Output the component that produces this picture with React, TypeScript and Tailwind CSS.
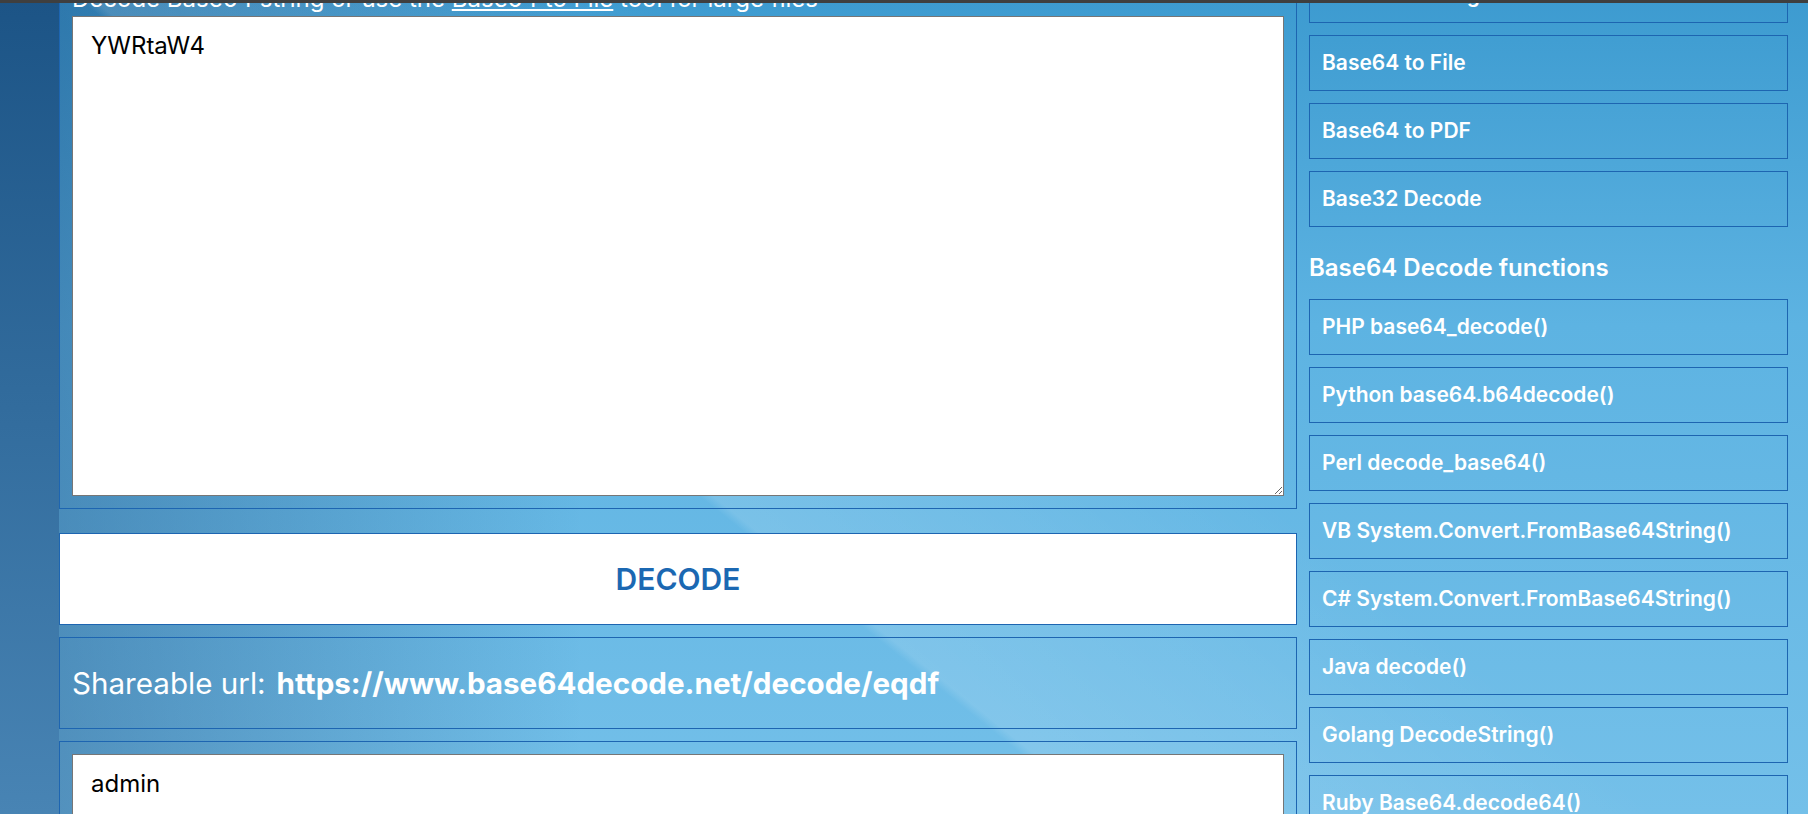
export default function App() {
  const topLinks = ["Base64 to Image", "Base64 to File", "Base64 to PDF", "Base32 Decode"];
  const fns = [
    "PHP base64_decode()",
    "Python base64.b64decode()",
    "Perl decode_base64()",
    "VB System.Convert.FromBase64String()",
    "C# System.Convert.FromBase64String()",
    "Java decode()",
    "Golang DecodeString()",
    "Ruby Base64.decode64()",
  ];
  return (
    <div className="relative flex h-[814px] w-[1808px] overflow-hidden [font-family:Inter,sans-serif] bg-[linear-gradient(to_bottom,#1c5486,#4884b4)]">
      <div className="w-[59px] shrink-0" />
      <div className="flex flex-1 items-start gap-[12px] bg-[linear-gradient(38.7deg,rgba(255,255,255,0)_37.5%,rgba(255,255,255,0.13)_38%,rgba(255,255,255,0.07)_48%,rgba(255,255,255,0)_58%),linear-gradient(to_right,rgba(15,50,100,0.33)_0%,rgba(15,50,100,0)_30%),linear-gradient(to_bottom,#3d9bd0_0%,#5db3e2_40%,#74c0e9_100%)]">
        <div className="mt-[-28px] flex w-[1238px] shrink-0 flex-col">
          <div className="border border-[#1d65b1] p-[12px]">
            <p className="mb-[3px] text-[24px] leading-[28px] text-white">
              Decode Base64 string or use the <a className="underline">Base64 to File</a> tool for large files
            </p>
            <textarea
              className="block h-[480px] w-full border border-[#767676] bg-white px-[18px] py-[12px] text-[24px] leading-[1.4] text-black outline-none"
              defaultValue="YWRtaW4"
            />
          </div>
          <button className="mt-[24px] h-[92px] border border-[#1d65b1] bg-white text-[30px] font-semibold text-[#1b68b2]">
            DECODE
          </button>
          <div className="mt-[12px] flex h-[92px] items-center border border-[#1d65b1] px-[12px] text-[29.6px] text-white">
            <span>Shareable url:</span>
            <span className="ml-[11px] font-bold">https://www.base64decode.net/decode/eqdf</span>
          </div>
          <div className="mt-[12px] border border-[#1d65b1] p-[12px]">
            <textarea
              className="block h-[480px] w-full border border-[#767676] bg-white px-[18px] py-[12px] text-[24px] leading-[1.4] text-black outline-none"
              defaultValue="admin"
            />
          </div>
        </div>
        <div className="mt-[-33px] flex w-[479px] shrink-0 flex-col">
          <div className="flex flex-col gap-[12px]">
            {topLinks.map((t) => (
              <div key={t} className="flex h-[56px] items-center border border-[#1d65b1] px-[12px] text-[21px] font-semibold leading-[28px] text-white">
                {t}
              </div>
            ))}
          </div>
          <h3 className="mb-[15px] mt-[25px] text-[24px] font-semibold leading-[32px] text-white">Base64 Decode functions</h3>
          <div className="flex flex-col gap-[12px]">
            {fns.map((t) => (
              <div key={t} className="flex h-[56px] items-center border border-[#1d65b1] px-[12px] text-[21px] font-semibold leading-[28px] text-white">
                {t}
              </div>
            ))}
          </div>
        </div>
      </div>
      <div className="absolute inset-x-0 top-0 h-[3px] bg-[#3f3f3f]" />
    </div>
  );
}
